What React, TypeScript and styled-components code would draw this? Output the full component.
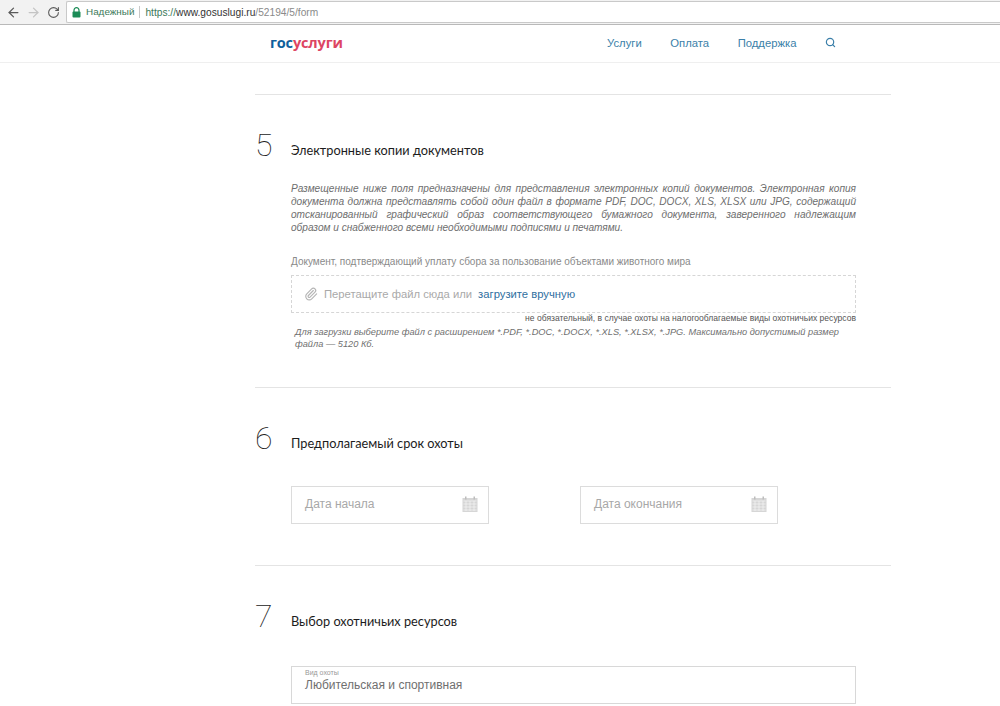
import React from 'react';
import styled, { createGlobalStyle } from 'styled-components';
import { ArrowLeft, ArrowRight, RotateCw, Search, Paperclip } from 'lucide-react';

const GlobalStyle = createGlobalStyle`
  html, body {
    margin: 0;
    padding: 0;
    background: #fff;
    height: 706px;
    overflow: hidden;
    font-family: "Liberation Sans", Arial, sans-serif;
  }
`;

const BrowserBar = styled.div`
  display: flex;
  align-items: center;
  height: 25px;
  box-sizing: border-box;
  padding: 2px 0 2px 3px;
  background: #f2f2f2;
  border-bottom: 1px solid #b9b9b9;
`;

const NavButton = styled.span<{ $muted?: boolean }>`
  display: flex;
  width: 20px;
  justify-content: center;
  color: ${(p) => (p.$muted ? '#c4c4c4' : '#5a5a5a')};
`;

const AddressBox = styled.div`
  flex: 1;
  display: flex;
  align-items: center;
  height: 20px;
  margin-left: 3px;
  padding-left: 5px;
  background: #fff;
  border: 1px solid #c9c9c9;
  border-right: none;
  border-radius: 2px 0 0 2px;
  font-size: 10.2px;
`;

const SecureLabel = styled.span`
  margin-left: 5px;
  padding-right: 5px;
  border-right: 1px solid #c8c8c8;
  color: #3c7a5a;
  font-size: 9.9px;
  line-height: 12px;
`;

const Url = styled.span`
  margin-left: 5px;
  color: #8a8a8a;
`;

const UrlScheme = styled.span`
  color: #3c7a5a;
`;

const UrlHost = styled.span`
  color: #333;
`;

const SiteHeader = styled.header`
  display: flex;
  align-items: center;
  height: 38px;
  box-sizing: border-box;
  padding: 0 0 2px 270px;
  border-bottom: 1px solid #efefef;
`;

const Logo = styled.div`
  width: 337px;
  font-family: "Open Sans", sans-serif;
  font-size: 14.5px;
  font-weight: 700;
  letter-spacing: -0.15px;
  color: #0f5f9c;
`;

const LogoAccent = styled.span`
  color: #dd4563;
`;

const SiteNav = styled.nav`
  display: flex;
  align-items: center;
  gap: 28.5px;
  font-size: 11.3px;
  color: #3b7fa9;
`;

const Content = styled.main`
  width: 636px;
  margin: 31px 0 0 255px;
`;

const Section = styled.section<{ $height: number }>`
  height: ${(p) => p.$height}px;
  box-sizing: border-box;
  padding-top: 30px;
  border-top: 1px solid #e4e4e4;
`;

const Heading = styled.div`
  display: flex;
  align-items: center;
  height: 40px;
`;

const StepNumber = styled.span`
  width: 36px;
  font-family: Roboto, sans-serif;
  font-size: 32px;
  font-weight: 100;
  color: #222;
`;

const StepTitle = styled.h2`
  margin: 9px 0 0;
  font-family: Lato, sans-serif;
  font-size: 12.75px;
  font-weight: 400;
  color: #1c1c1c;
`;

const Body = styled.div`
  margin-left: 36px;
  width: 565px;
`;

const Description = styled.p`
  margin: 17px 0 0;
  font-size: 10.1px;
  line-height: 13px;
  font-style: italic;
  color: #6e6e6e;
`;

const DescriptionLine = styled.span<{ $last?: boolean }>`
  display: block;
  white-space: nowrap;
  text-align: justify;
  text-align-last: ${(p) => (p.$last ? 'left' : 'justify')};
`;

const FieldLabel = styled.div`
  margin-top: 21px;
  font-size: 10px;
  line-height: 13px;
  color: #8a8a8a;
`;

const DropZone = styled.div`
  display: flex;
  align-items: center;
  height: 38px;
  box-sizing: border-box;
  margin-top: 7px;
  padding-left: 12px;
  border: 1px dashed #d6d6d6;
  font-size: 11.25px;
  color: #a9a9a9;
`;

const ClipIcon = styled.span`
  display: flex;
  margin-right: 6px;
  color: #b5b5b5;
`;

const UploadLink = styled.span`
  margin-left: 6px;
  color: #2f6f9f;
`;

const OptionalNote = styled.div`
  text-align: right;
  font-size: 8.55px;
  line-height: 11px;
  color: #555;
`;

const Hint = styled.p`
  margin: 2px 0 0;
  padding: 0 14px 0 4px;
  font-size: 9.25px;
  line-height: 12px;
  font-style: italic;
  color: #707070;
`;

const DateRow = styled.div`
  display: flex;
  gap: 91px;
  margin-top: 28px;
`;

const DateField = styled.div`
  display: flex;
  align-items: center;
  justify-content: space-between;
  width: 198px;
  height: 38px;
  box-sizing: border-box;
  padding: 0 10px 2px 13px;
  border: 1px solid #dcdcdc;
  font-size: 12px;
  color: #a8a8a8;
`;

const SelectField = styled.div`
  height: 38px;
  box-sizing: border-box;
  margin-top: 30px;
  padding: 1px 13px;
  border: 1px solid #d8d8d8;
`;

const SelectLabel = styled.div`
  font-size: 7px;
  line-height: 9px;
  color: #999;
`;

const SelectValue = styled.div`
  margin-top: 1px;
  font-size: 12px;
  line-height: 15px;
  color: #6f6f6f;
`;

const LockIcon = () => (
  <svg width="9" height="11" viewBox="0 0 9 11">
    <path d="M2 5V3.2a2.5 2.5 0 0 1 5 0V5" fill="none" stroke="#1c8c57" strokeWidth="1.2" />
    <rect x="0.5" y="4.5" width="8" height="6" rx="1" fill="#1c8c57" />
  </svg>
);

const CalendarIcon = () => (
  <svg width="16" height="16" viewBox="0 0 16 16">
    <rect x="0.5" y="2" width="15" height="14" fill="#d6d6d6" />
    <rect x="3" y="0.5" width="1.5" height="3" fill="#bdbdbd" />
    <rect x="11.5" y="0.5" width="1.5" height="3" fill="#bdbdbd" />
    <path d="M1.5 5h13M1.5 8h13M1.5 11h13M1.5 14h13M4 5v10M8 5v10M12 5v10" stroke="#f3f3f3" strokeWidth="0.8" />
  </svg>
);

const App = () => {
  return (
    <>
      <GlobalStyle />
      <BrowserBar>
        <NavButton><ArrowLeft size={15} /></NavButton>
        <NavButton $muted><ArrowRight size={15} /></NavButton>
        <NavButton><RotateCw size={13} /></NavButton>
        <AddressBox>
          <LockIcon />
          <SecureLabel>Надежный</SecureLabel>
          <Url>
            <UrlScheme>https://</UrlScheme>
            <UrlHost>www.gosuslugi.ru</UrlHost>/52194/5/form
          </Url>
        </AddressBox>
      </BrowserBar>
      <SiteHeader>
        <Logo>гос<LogoAccent>услуги</LogoAccent></Logo>
        <SiteNav>
          <span>Услуги</span>
          <span>Оплата</span>
          <span>Поддержка</span>
          <Search size={11} strokeWidth={2.6} />
        </SiteNav>
      </SiteHeader>
      <Content>
        <Section $height={293}>
          <Heading>
            <StepNumber>5</StepNumber>
            <StepTitle>Электронные копии документов</StepTitle>
          </Heading>
          <Body>
            <Description>
              <DescriptionLine>Размещенные ниже поля предназначены для представления электронных копий документов. Электронная копия</DescriptionLine>
              <DescriptionLine>документа должна представлять собой один файл в формате PDF, DOC, DOCX, XLS, XLSX или JPG, содержащий</DescriptionLine>
              <DescriptionLine>отсканированный графический образ соответствующего бумажного документа, заверенного надлежащим</DescriptionLine>
              <DescriptionLine $last>образом и снабженного всеми необходимыми подписями и печатями.</DescriptionLine>
            </Description>
            <FieldLabel>Документ, подтверждающий уплату сбора за пользование объектами животного мира</FieldLabel>
            <DropZone>
              <ClipIcon><Paperclip size={14} /></ClipIcon>
              Перетащите файл сюда или
              <UploadLink>загрузите вручную</UploadLink>
            </DropZone>
            <OptionalNote>не обязательный, в случае охоты на налогооблагаемые виды охотничьих ресурсов</OptionalNote>
            <Hint>
              Для загрузки выберите файл с расширением *.PDF, *.DOC, *.DOCX, *.XLS, *.XLSX, *.JPG. Максимально допустимый размер
              файла — 5120 Кб.
            </Hint>
          </Body>
        </Section>
        <Section $height={178}>
          <Heading>
            <StepNumber>6</StepNumber>
            <StepTitle>Предполагаемый срок охоты</StepTitle>
          </Heading>
          <Body>
            <DateRow>
              <DateField>Дата начала<CalendarIcon /></DateField>
              <DateField>Дата окончания<CalendarIcon /></DateField>
            </DateRow>
          </Body>
        </Section>
        <Section $height={141}>
          <Heading>
            <StepNumber>7</StepNumber>
            <StepTitle>Выбор охотничьих ресурсов</StepTitle>
          </Heading>
          <Body>
            <SelectField>
              <SelectLabel>Вид охоты</SelectLabel>
              <SelectValue>Любительская и спортивная</SelectValue>
            </SelectField>
          </Body>
        </Section>
      </Content>
    </>
  );
};

export default App;
